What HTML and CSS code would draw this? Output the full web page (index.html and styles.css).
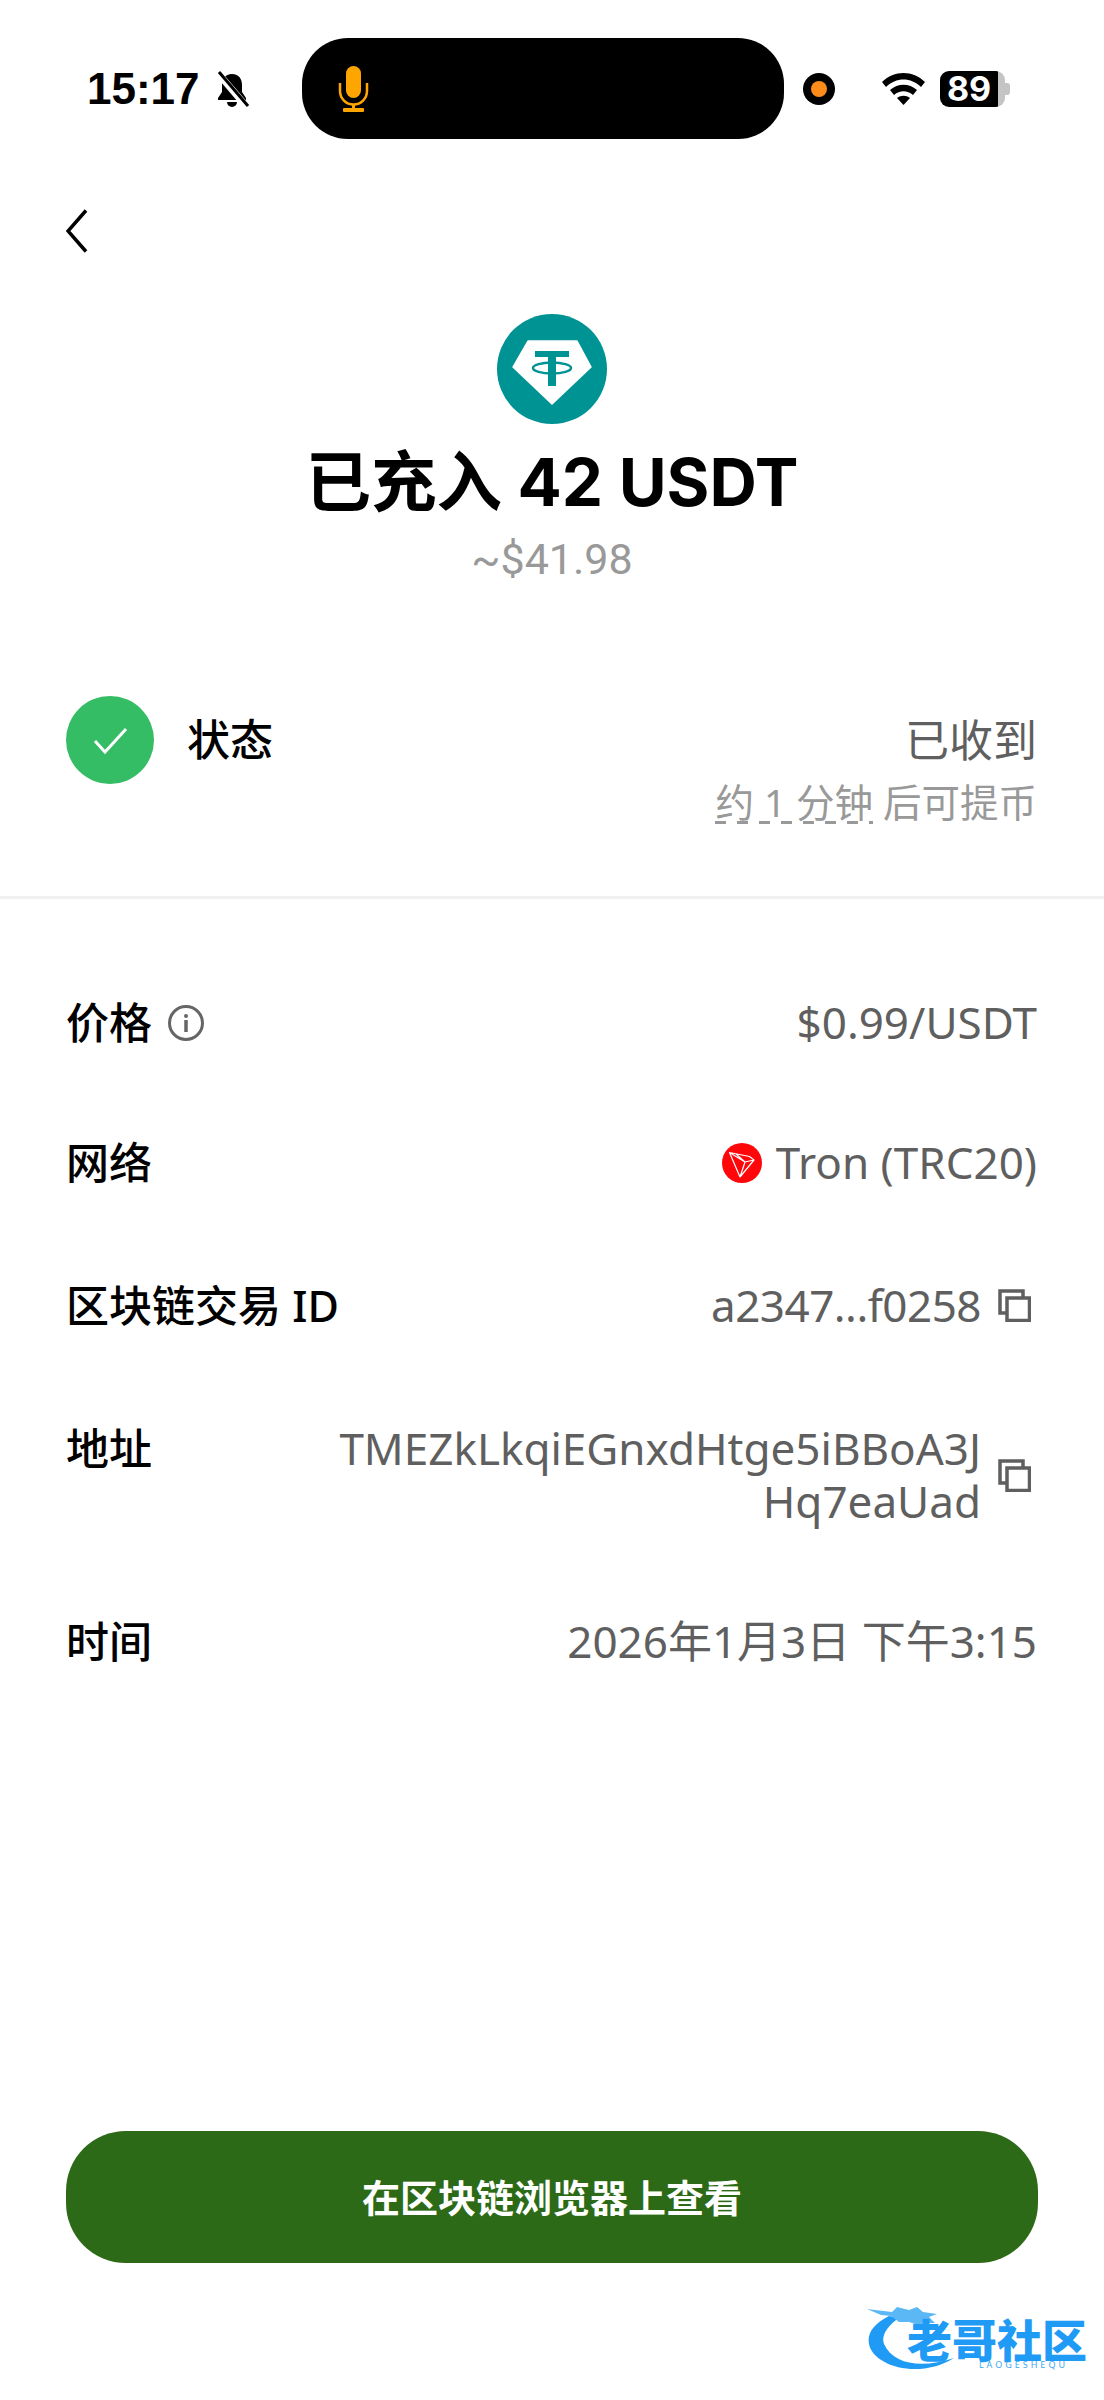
FILE: index.html
```html
<!DOCTYPE html>
<html lang="zh-CN">
  <head>
    <meta charset="UTF-8" />
    <meta name="viewport" content="width=device-width, initial-scale=1.0" />
    <title>已充入 42 USDT</title>
    <link rel="stylesheet" href="styles.css">
  </head>
  <body>
    <div class="page">
      <div class="status-bar">
        <span class="clock">15:17</span>
        <svg class="bell" viewBox="0 0 36 36">
          <path d="M18 3c-7 0-10 5-10 11v7l-4 6v2h28v-2l-4-6v-7c0-6-3-11-10-11z" fill="#000" />
          <path d="M13 31a5 5 0 0 0 10 0z" fill="#000" />
          <path d="M3 1l29 34" stroke="#fff" stroke-width="7" />
          <path d="M5 1l29 34" stroke="#000" stroke-width="3" />
        </svg>
        <div class="island">
          <svg class="mic" viewBox="0 0 31 46">
            <rect x="8" y="0" width="15" height="32" rx="7.5" fill="#ffa500" />
            <path d="M2 17v8a13.500 13.500 0 0 0 27 0v-8" fill="none" stroke="#ffa500" stroke-width="2.500" />
            <path d="M15.500 38v5" stroke="#ffa500" stroke-width="3" />
            <rect x="5" y="42" width="21" height="4" rx="1" fill="#ffa500" />
          </svg>
        </div>
        <span class="rec-dot"></span>
        <svg class="wifi" viewBox="0 0 43 32">
          <path d="M0 9C12-3 31-3 43 9l-4 5C29 4 14 4 4 14z" fill="#000" />
          <path d="M8 17c8-7 19-7 27 0l-4 5c-6-5-13-5-19 0z" fill="#000" />
          <path d="M15 25c4-3 9-3 13 0l-6.500 7z" fill="#000" />
        </svg>
        <div class="battery">
          <div class="battery-body"><span class="battery-level">89</span></div>
          <span class="battery-nub"></span>
        </div>
      </div>

      <div class="nav">
        <svg class="back" viewBox="0 0 22 44">
          <path d="M20 1.500L2 22l18 20.500" fill="none" stroke="#000" stroke-width="3.500" />
        </svg>
      </div>

      <div class="summary">
        <svg class="coin" viewBox="0 0 110 110">
          <circle cx="55" cy="55" r="55" fill="#009393" />
          <path d="M31 27h49l14 26-39 37-39-37z" fill="#fff" stroke="#fff" stroke-width="1.500" stroke-linejoin="round" />
          <path d="M38 37h34v6H59v29h-8V43H38z" fill="#009393" />
          <ellipse cx="55" cy="54" rx="19" ry="5.500" fill="none" stroke="#009393" stroke-width="2.500" />
        </svg>
        <h1 class="headline">已充入 42 USDT</h1>
        <div class="fiat">~$41.98</div>
      </div>

      <div class="status-row">
        <svg class="status-icon" viewBox="0 0 88 88">
          <circle cx="44" cy="44" r="44" fill="#34bd64" />
          <path d="M29 45l10 11 21-23" fill="none" stroke="#fff" stroke-width="3" />
        </svg>
        <span class="status-label">状态</span>
        <div class="status-text">
          <div class="status-main">已收到</div>
          <div class="status-note"><span class="dashed">约 1 分钟</span> 后可提币</div>
        </div>
      </div>

      <div class="details">
        <div class="detail detail-price">
          <div class="detail-label">
            价格
            <svg class="info" viewBox="0 0 36 36">
              <circle cx="18" cy="18" r="16.500" fill="none" stroke="#666" stroke-width="3" />
              <rect x="16" y="9" width="4" height="4" rx="2" fill="#666" />
              <path d="M18 15v12" stroke="#666" stroke-width="3.500" />
            </svg>
          </div>
          <div class="detail-value">$0.99/USDT</div>
        </div>
        <div class="detail">
          <div class="detail-label">网络</div>
          <div class="detail-value">
            <svg class="tron" viewBox="0 0 40 40">
              <circle cx="20" cy="20" r="20" fill="#ff060a" />
              <path d="M7.500 9.500L18 34l14-17-4.500-3.500zM7.500 9.500L23 19l-5 15M23 19l9-2M14 11l9 8" fill="none" stroke="#fff" stroke-width="1.200" stroke-linejoin="round" />
            </svg>
            Tron (TRC20)
          </div>
        </div>
        <div class="detail">
          <div class="detail-label">区块链交易 ID</div>
          <div class="detail-value">
            <span class="tx-id">a2347...f0258</span>
            <svg class="copy" viewBox="0 0 33 33">
              <path d="M8 24H2V2h23v6" fill="none" stroke="#5f5f5f" stroke-width="3.500" />
              <rect x="9" y="9" width="22.500" height="22.500" fill="none" stroke="#5f5f5f" stroke-width="3.500" />
            </svg>
          </div>
        </div>
        <div class="detail">
          <div class="detail-label">地址</div>
          <div class="detail-value">
            <span class="address">TMEZkLkqiEGnxdHtge5iBBoA3JHq7eaUad</span>
            <svg class="copy" viewBox="0 0 33 33">
              <path d="M8 24H2V2h23v6" fill="none" stroke="#5f5f5f" stroke-width="3.500" />
              <rect x="9" y="9" width="22.500" height="22.500" fill="none" stroke="#5f5f5f" stroke-width="3.500" />
            </svg>
          </div>
        </div>
        <div class="detail detail-time">
          <div class="detail-label">时间</div>
          <div class="detail-value">2026年1月3日 下午3:15</div>
        </div>
      </div>

      <button type="button" class="explorer-btn">在区块链浏览器上查看</button>

      <div class="watermark">
        <svg class="dragon" viewBox="0 0 120 72">
          <path d="M22 14C6 22 0 32 2 42c4 22 50 36 85 14-30 10-60 8-70-14-3-8 3-18 15-26z" fill="#1f9bf5" />
          <path d="M0 7l25 3 5-5 12 3 8-3 6 5 14 2-8 3 6 6-12 0-2 3-12-4-10 0-8-6-10-1z" fill="#5bb8f5" />
        </svg>
        <div class="watermark-text">
          <span class="watermark-name">老哥社区</span>
          <span class="watermark-sub">LAOGESHEQU</span>
        </div>
      </div>
    </div>
  </body>
</html>
```

FILE: styles.css
```css
* {
  box-sizing: border-box;
}
body {
  margin: 0;
  background-color: #ffffff;
  font-family: "Noto Sans", "Noto Sans CJK SC", sans-serif;
}
.page {
  position: relative;
  width: 1104px;
  height: 2400px;
  display: flex;
  flex-direction: column;
  overflow: hidden;
}

/* status bar */
.status-bar {
  display: flex;
  align-items: center;
  height: 101px;
  margin-top: 38px;
  padding-left: 87px;
}
.clock {
  width: 127px;
  font-family: "Liberation Sans", sans-serif;
  font-size: 44px;
  font-weight: 700;
  color: #000;
}
.bell {
  width: 36px;
  height: 36px;
  margin-right: 52px;
}
.island {
  width: 482px;
  height: 101px;
  padding-left: 36px;
  display: flex;
  align-items: center;
  background-color: #000;
  border-radius: 46px;
}
.mic {
  width: 31px;
  height: 46px;
}
.rec-dot {
  width: 32px;
  height: 32px;
  margin-left: 19px;
  border-radius: 50%;
  background-color: #000;
  display: flex;
  align-items: center;
  justify-content: center;
}
.rec-dot::after {
  content: "";
  width: 16px;
  height: 16px;
  border-radius: 50%;
  background-color: #ff8c1a;
}
.wifi {
  width: 43px;
  height: 32px;
  margin-left: 47px;
}
.battery {
  display: flex;
  align-items: center;
  margin-left: 15px;
}
.battery-body {
  width: 65px;
  height: 36px;
  border-radius: 9px;
  background: linear-gradient(to right, #000 58px, #c4c4c4 58px);
}
.battery-level {
  display: block;
  width: 58px;
  font-family: "Inter", sans-serif;
  font-size: 34px;
  font-weight: 700;
  line-height: 36px;
  text-align: center;
  color: #fff;
}
.battery-nub {
  width: 5px;
  height: 12px;
  background-color: #c4c4c4;
  border-radius: 0 3px 3px 0;
}

/* back */
.nav {
  padding: 70px 0 0 66px;
}
.back {
  display: block;
  width: 22px;
  height: 44px;
}

/* summary */
.summary {
  display: flex;
  flex-direction: column;
  align-items: center;
  margin-top: 61px;
}
.coin {
  width: 110px;
  height: 110px;
}
.headline {
  margin: 19px 0 0;
  font-family: "Inter", "Noto Sans CJK SC", sans-serif;
  font-size: 65.500px;
  font-weight: 700;
  line-height: 80px;
  color: #000;
}
.fiat {
  margin-top: 11px;
  font-family: "Roboto", sans-serif;
  font-size: 43px;
  line-height: 50px;
  color: #999999;
}

/* status */
.status-row {
  display: flex;
  align-items: flex-start;
  margin-top: 112px;
  padding: 0 67px 0 66px;
  height: 203px;
  border-bottom: 3px solid #f0f0f0;
}
.status-icon {
  width: 88px;
  height: 88px;
  flex-shrink: 0;
}
.status-label {
  margin-left: 33px;
  font-size: 43px;
  font-weight: 500;
  line-height: 88px;
  color: #000;
}
.status-text {
  margin-left: auto;
  text-align: right;
}
.status-main {
  font-size: 44px;
  line-height: 88px;
  color: #5f5f5f;
}
.status-note {
  font-size: 38.500px;
  line-height: 50px;
  color: #999999;
  margin-top: -7px;
}
.dashed {
  background-image: repeating-linear-gradient(to right, #999999 0 11px, transparent 11px 22px);
  background-size: 100% 3px;
  background-position: left bottom 4px;
  background-repeat: no-repeat;
}

/* details */
.details {
  display: flex;
  flex-direction: column;
  gap: 90px;
  margin-top: 97px;
  padding: 0 67px 0 66px;
}
.detail {
  display: flex;
  justify-content: space-between;
  align-items: flex-start;
}
.detail-price {
  margin-bottom: -3px;
}
.detail-time {
  margin-top: -3px;
}
.detail-label {
  display: flex;
  align-items: center;
  gap: 16px;
  flex-shrink: 0;
  font-size: 43px;
  font-weight: 500;
  line-height: 53px;
  color: #000;
}
.info {
  width: 36px;
  height: 36px;
}
.detail-value {
  display: flex;
  align-items: center;
  font-size: 44px;
  font-weight: 400;
  line-height: 53px;
  color: #5f5f5f;
}
.tron {
  width: 40px;
  height: 40px;
  margin-right: 14px;
}
.copy {
  width: 33px;
  height: 33px;
  margin: 0 6px 0 17px;
  flex-shrink: 0;
}
.tx-id {
  letter-spacing: -0.500px;
}
.address {
  width: 645px;
  word-break: break-all;
  text-align: right;
}

/* bottom */
.explorer-btn {
  margin: auto 66px 137px;
  height: 132px;
  padding-bottom: 4px;
  border: none;
  border-radius: 60px;
  background-color: #2d6a17;
  color: #fff;
  font-family: inherit;
  font-size: 38px;
  font-weight: 600;
}
.watermark {
  position: absolute;
  left: 867px;
  top: 2302px;
  width: 221px;
  height: 72px;
}
.dragon {
  display: block;
  width: 120px;
  height: 72px;
}
.watermark-text {
  position: absolute;
  left: 40px;
  top: 20px;
  width: 181px;
  display: flex;
  flex-direction: column;
  align-items: flex-end;
  white-space: nowrap;
}
.watermark-name {
  width: 181px;
  font-size: 45px;
  font-weight: 900;
  line-height: 38px;
  color: #1f9bf5;
}
.watermark-sub {
  font-size: 9px;
  line-height: 10px;
  letter-spacing: 3px;
  color: #3aa8f5;
  margin: 0 20px 0 0;
}
```
